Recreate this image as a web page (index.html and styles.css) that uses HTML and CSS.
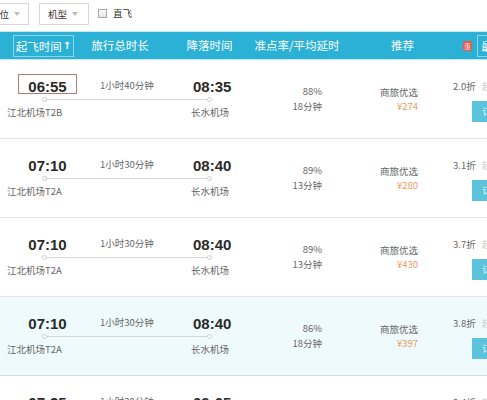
FILE: index.html
```html
<!DOCTYPE html>
<html lang="zh">
<head>
<meta charset="utf-8">
<link rel="stylesheet" href="styles.css">
</head>
<body>
<div class="page">
  <div class="filters">
    <div class="select first"><span>舱位</span><i class="caret"></i></div>
    <div class="select"><span>机型</span><i class="caret"></i></div>
    <div class="check"><span class="cbox"></span><span>直飞</span></div>
  </div>
  <div class="thead">
    <div class="th c1"><span class="sorted">起飞时间<b>↑</b></span></div>
    <div class="th c2">旅行总时长</div>
    <div class="th c3">降落时间</div>
    <div class="th c4">准点率/平均延时</div>
    <div class="th c5">推荐<span class="badge">惠</span></div>
    <div class="th c6"><span class="best">最低价</span></div>
  </div>

  <div class="row">
    <div class="route">
      <div class="route-top">
        <div class="time dep boxed">06:55</div>
        <div class="dur">1小时40分钟</div>
        <div class="time arr">08:35</div>
      </div>
      <div class="track"></div>
      <div class="route-bottom"><span class="ap-dep">江北机场T2B</span><span>长水机场</span></div>
    </div>
    <div class="punct"><div>88%</div><div>18分钟</div></div>
    <div class="rec"><div>商旅优选</div><div class="price">¥274</div></div>
    <div class="fare"><div class="disc">2.0折<span class="more">起</span></div><div class="btn">订票</div></div>
  </div>

  <div class="row">
    <div class="route">
      <div class="route-top">
        <div class="time dep">07:10</div>
        <div class="dur">1小时30分钟</div>
        <div class="time arr">08:40</div>
      </div>
      <div class="track"></div>
      <div class="route-bottom"><span class="ap-dep">江北机场T2A</span><span>长水机场</span></div>
    </div>
    <div class="punct"><div>89%</div><div>13分钟</div></div>
    <div class="rec"><div>商旅优选</div><div class="price">¥280</div></div>
    <div class="fare"><div class="disc">3.1折<span class="more">起</span></div><div class="btn">订票</div></div>
  </div>

  <div class="row">
    <div class="route">
      <div class="route-top">
        <div class="time dep">07:10</div>
        <div class="dur">1小时30分钟</div>
        <div class="time arr">08:40</div>
      </div>
      <div class="track"></div>
      <div class="route-bottom"><span class="ap-dep">江北机场T2A</span><span>长水机场</span></div>
    </div>
    <div class="punct"><div>89%</div><div>13分钟</div></div>
    <div class="rec"><div>商旅优选</div><div class="price">¥430</div></div>
    <div class="fare"><div class="disc">3.7折<span class="more">起</span></div><div class="btn">订票</div></div>
  </div>

  <div class="row hl">
    <div class="route">
      <div class="route-top">
        <div class="time dep">07:10</div>
        <div class="dur">1小时30分钟</div>
        <div class="time arr">08:40</div>
      </div>
      <div class="track"></div>
      <div class="route-bottom"><span class="ap-dep">江北机场T2A</span><span>长水机场</span></div>
    </div>
    <div class="punct"><div>86%</div><div>18分钟</div></div>
    <div class="rec"><div>商旅优选</div><div class="price">¥397</div></div>
    <div class="fare"><div class="disc">3.8折<span class="more">起</span></div><div class="btn">订票</div></div>
  </div>

  <div class="row">
    <div class="route">
      <div class="route-top">
        <div class="time dep">07:35</div>
        <div class="dur">1小时30分钟</div>
        <div class="time arr">09:05</div>
      </div>
      <div class="track"></div>
      <div class="route-bottom"><span class="ap-dep">江北机场T2A</span><span>长水机场</span></div>
    </div>
    <div class="punct"><div>90%</div><div>12分钟</div></div>
    <div class="rec"><div>商旅优选</div><div class="price">¥360</div></div>
    <div class="fare"><div class="disc">3.4折<span class="more">起</span></div><div class="btn">订票</div></div>
  </div>
</div>
</body>
</html>
```

FILE: styles.css
```css
html, body {
  margin: 0;
  padding: 0;
  background: #fff;
  overflow: hidden;
}
.page {
  width: 540px;
  font-family: "Noto Sans CJK SC", "Liberation Sans", sans-serif;
  font-size: 9.5px;
  color: #666;
}

/* filter bar */
.filters {
  height: 31px;
  border-bottom: 1px solid #c3e9f3;
  display: flex;
  align-items: flex-start;
}
.select {
  margin-top: 3px;
  height: 22px;
  box-sizing: border-box;
  border: 1px solid #d6d6d6;
  display: flex;
  align-items: center;
  padding: 0 10px 0 8px;
  color: #333;
  line-height: 12px;
  margin-left: 10px;
}
.select.first {
  margin-left: -19px;
  padding-right: 8px;
}
.caret {
  width: 0;
  height: 0;
  border-left: 3.5px solid transparent;
  border-right: 3.5px solid transparent;
  border-top: 4px solid #bdbdbd;
  margin-left: 5px;
}
.check {
  display: flex;
  align-items: center;
  margin-left: 9px;
  margin-top: 8px;
  color: #333;
  line-height: 10px;
}
.cbox {
  width: 7px;
  height: 7px;
  border: 1px solid #a9a9a9;
  background: linear-gradient(#fafafa, #e6e6e6);
  margin-right: 6px;
}

/* table header */
.thead {
  height: 27px;
  background: #2bb1d5;
  border-bottom: 1px solid #bfe8f3;
  display: flex;
  color: #fff;
  font-size: 11.5px;
  line-height: 27px;
}
.th {
  display: flex;
  justify-content: center;
  align-items: center;
  white-space: nowrap;
  flex: none;
}
.c1 { width: 87px; }
.c2 { width: 66px; }
.c3 { width: 113px; }
.c4 { width: 62px; }
.c5 { width: 149px; position: relative; }
.c6 { width: 60px; justify-content: flex-start; }
.sorted {
  width: 61px;
  height: 22px;
  box-sizing: border-box;
  border: 1px solid #8fd6ea;
  display: flex;
  justify-content: center;
  align-items: center;
  line-height: 20px;
}
.sorted b {
  font-family: "DejaVu Sans", sans-serif;
  font-size: 10px;
  margin-left: 1px;
}
.badge {
  position: absolute;
  right: 5px;
  top: 9px;
  width: 9px;
  height: 10px;
  border-radius: 2px;
  background: #e9593e;
  color: #fde;
  font-size: 7px;
  line-height: 10px;
  text-align: center;
}
.best {
  height: 22px;
  box-sizing: border-box;
  border: 1px solid #8fd6ea;
  padding: 0 3px;
  line-height: 20px;
}

/* rows */
.row {
  height: 79px;
  box-sizing: border-box;
  border-bottom: 1px solid #dfe8e9;
  display: flex;
}
.row.hl {
  background: #eefafc;
  border-bottom-color: #cfdfde;
}
.route {
  width: 250px;
  flex: none;
  padding-top: 14px;
}
.route-top {
  display: flex;
  height: 20px;
}
.time {
  font-family: "Liberation Sans", Arial, sans-serif;
  font-weight: bold;
  font-size: 15px;
  color: #2a2a2a;
  line-height: 12px;
  height: 20px;
  box-sizing: border-box;
  border: 1px solid transparent;
  padding-top: 6px;
  white-space: nowrap;
}
.time.dep {
  margin-left: 18px;
  width: 59px;
  text-align: center;
}
.time.boxed {
  border-color: #b07a7a;
}
.dur {
  margin-left: 23px;
  width: 92px;
  margin-top: 5px;
  line-height: 12px;
  white-space: nowrap;
}
.track {
  position: relative;
  margin-left: 44px;
  width: 166px;
  height: 1px;
  background: #d6d6d6;
  margin-top: 5px;
}
.track::before,
.track::after {
  content: "";
  position: absolute;
  top: -2px;
  width: 3px;
  height: 3px;
  border: 1px solid #cfcfcf;
  border-radius: 50%;
  background: #fff;
}
.track::before { left: -2px; }
.track::after { right: -2px; }
.route-bottom {
  margin-top: 6px;
  display: flex;
  line-height: 12px;
  white-space: nowrap;
}
.ap-dep {
  margin-left: 7px;
  width: 184px;
}
.punct {
  width: 72px;
  flex: none;
  text-align: right;
  padding-top: 24px;
  line-height: 15px;
}
.rec {
  width: 96px;
  flex: none;
  text-align: right;
  padding-top: 25px;
  line-height: 14px;
}
.price {
  color: #f09a5a;
}
.fare {
  flex: none;
  width: 110px;
  padding-left: 35px;
  box-sizing: border-box;
  padding-top: 20px;
}
.disc {
  line-height: 12px;
  white-space: nowrap;
}
.more {
  margin-left: 6px;
  color: #d0d0d0;
}
.btn {
  margin-left: 19px;
  margin-top: 9px;
  width: 40px;
  height: 21px;
  background: #5bc3dc;
  color: #e6f7fb;
  line-height: 21px;
  padding-left: 10px;
  box-sizing: border-box;
}
```
